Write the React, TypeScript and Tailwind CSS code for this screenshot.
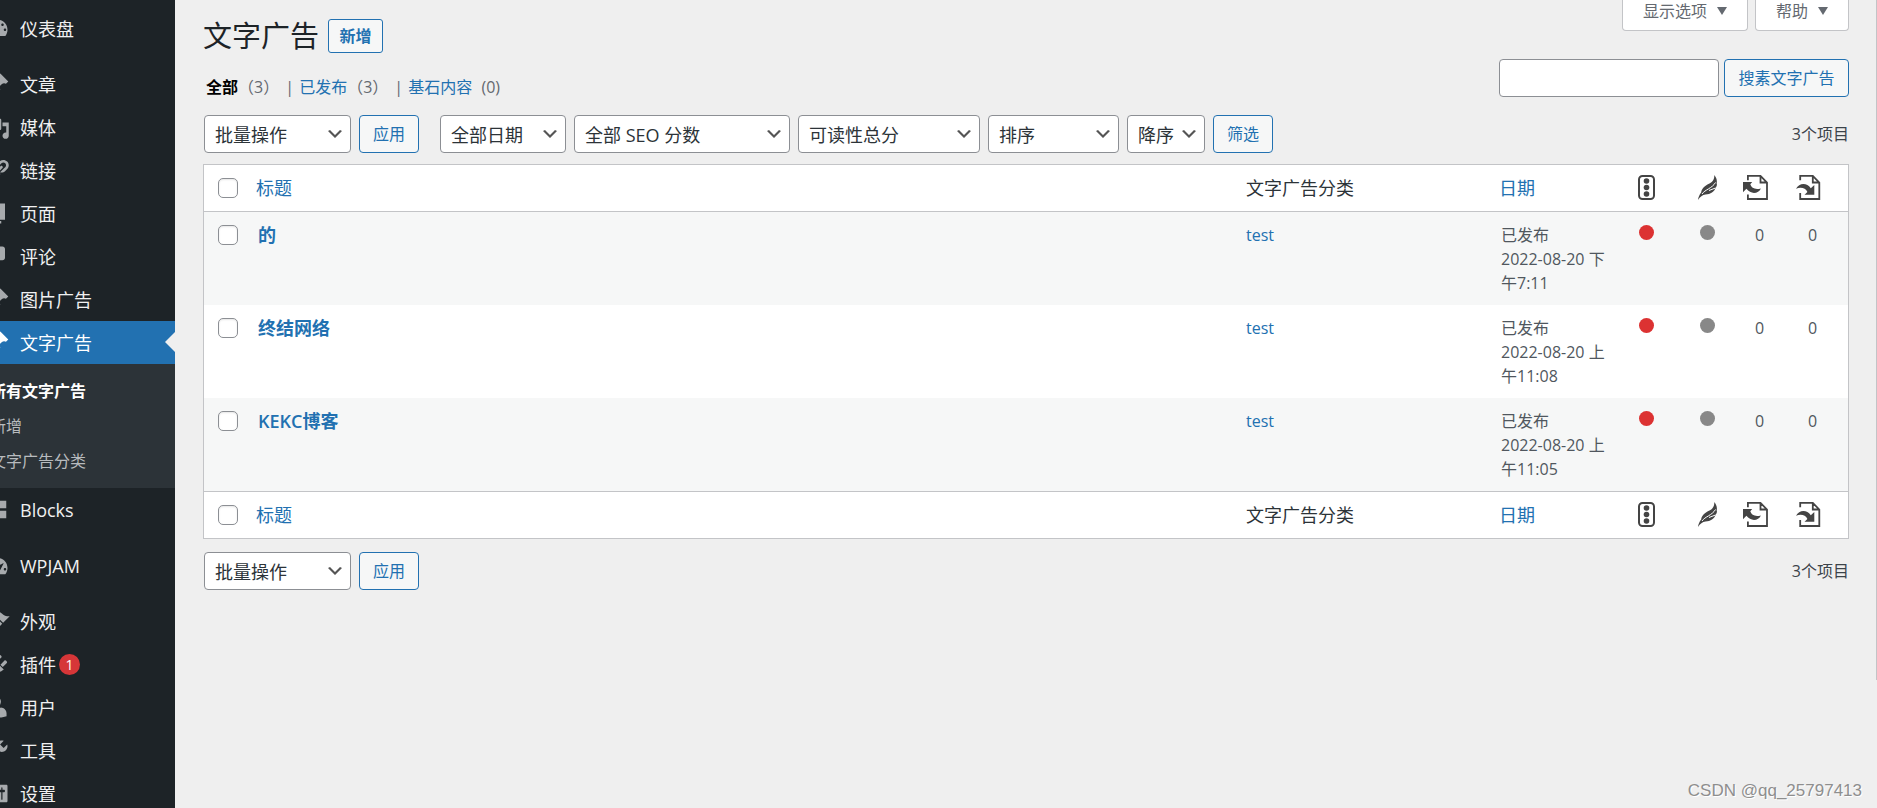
import * as React from "react"
import { clsx } from "clsx"

const icons = {
  dashboard:
    "M3.76 16h12.48c1.1-1.37 1.76-3.11 1.76-5 0-4.42-3.58-8-8-8s-8 3.58-8 8c0 1.89.66 3.63 1.76 5zM10 4c.55 0 1 .45 1 1s-.45 1-1 1-1-.45-1-1 .45-1 1-1zM6 6c.55 0 1 .45 1 1s-.45 1-1 1-1-.45-1-1 .45-1 1-1zm8 0c.55 0 1 .45 1 1s-.45 1-1 1-1-.45-1-1 .45-1 1-1zm-5.37 5.55L12 7v6c0 1.1-.9 2-2 2s-2-.9-2-2c0-.57.24-1.08.63-1.45zM4 10c.55 0 1 .45 1 1s-.45 1-1 1-1-.45-1-1 .45-1 1-1zm12 0c.55 0 1 .45 1 1s-.45 1-1 1-1-.45-1-1 .45-1 1-1zm-5 3c0-.55-.45-1-1-1s-1 .45-1 1 .45 1 1 1 1-.45 1-1z",
  post: "M10.44 3.02l1.82-1.82 6.36 6.35-1.83 1.82c-1.05-.68-2.48-.57-3.41.36l-.75.75c-.92.93-1.04 2.35-.35 3.41l-1.83 1.82-2.41-2.41-2.8 2.79c-.42.42-3.38 2.71-3.8 2.29s1.86-3.39 2.28-3.81l2.79-2.79L4.1 9.36l1.83-1.82c1.05.69 2.48.57 3.4-.36l.75-.75c.93-.92 1.05-2.35.36-3.41z",
  media:
    "M13 11V4c0-.55-.45-1-1-1h-1.67L9 1H5L3.67 3H2c-.55 0-1 .45-1 1v7c0 .55.45 1 1 1h10c.55 0 1-.45 1-1zM7 4.5c1.38 0 2.5 1.12 2.5 2.5S8.38 9.5 7 9.5 4.5 8.38 4.5 7 5.62 4.5 7 4.5zM14 6h5v10.5c0 1.38-1.12 2.5-2.5 2.5S14 17.88 14 16.5s1.12-2.5 2.5-2.5c.17 0 .34.02.5.05V9h-3V6zm-4 8.05V13h2v3.5c0 1.38-1.12 2.5-2.5 2.5S7 17.88 7 16.5 8.12 14 9.5 14c.17 0 .34.02.5.05z",
  links:
    "M17.74 2.76c1.68 1.69 1.68 4.41 0 6.1l-1.53 1.52c-1.12 1.12-2.7 1.47-4.14 1.09l2.62-2.61.76-.77.76-.76c.84-.84.84-2.2 0-3.04-.84-.85-2.2-.85-3.04 0l-.77.76-3.38 3.38c-.37-1.44-.02-3.02 1.1-4.14l1.52-1.53c1.69-1.68 4.42-1.68 6.1 0zM8.59 13.43l5.34-5.34c.42-.42.42-1.1 0-1.52-.44-.43-1.13-.39-1.53 0l-5.33 5.34c-.42.42-.42 1.1 0 1.52.44.43 1.13.39 1.52 0zm-.76 2.29l4.14-4.15c.38 1.44.03 3.02-1.09 4.14l-1.52 1.53c-1.69 1.68-4.41 1.68-6.1 0-1.68-1.68-1.68-4.42 0-6.1l1.53-1.52c1.12-1.12 2.7-1.47 4.14-1.1l-4.14 4.15c-.85.84-.85 2.2 0 3.05.84.84 2.2.84 3.04 0z",
  page: "M6 15V2h10v13H6zm-1 1h8v2H3V5h2v11z",
  comments: "M5 2h9c1.1 0 2 .9 2 2v7c0 1.1-.9 2-2 2h-2l-5 5v-5H5c-1.1 0-2-.9-2-2V4c0-1.1.9-2 2-2z",
  blocks: "M9 9V3H3v6h6zm8 0V3h-6v6h6zm-8 8v-6H3v6h6zm8 0v-6h-6v6h6z",
  performance:
    "M3.76 17.01h12.48C17.34 15.63 18 13.9 18 12c0-4.41-3.58-8-8-8s-8 3.59-8 8c0 1.9.66 3.63 1.76 5.01zM9 6c0-.55.45-1 1-1s1 .45 1 1c0 .56-.45 1-1 1s-1-.44-1-1zM4 8c0-.55.45-1 1-1s1 .45 1 1c0 .56-.45 1-1 1s-1-.44-1-1zm4.52 3.4c.84-.83 6.51-3.5 6.51-3.5s-2.66 5.68-3.49 6.51c-.84.84-2.18.84-3.02 0-.83-.83-.83-2.18 0-3.01zM3 13c0-.55.45-1 1-1s1 .45 1 1c0 .56-.45 1-1 1s-1-.44-1-1zm6 0c0 .56.45 1 1 1s1-.44 1-1c0-.55-.45-1-1-1s-1 .45-1 1zm6 0c0-.55.45-1 1-1s1 .45 1 1c0 .56-.45 1-1 1s-1-.44-1-1z",
  appearance:
    "M14.48 11.06L7.41 3.99l1.5-1.5c.5-.56 2.3-.47 3.51.32 1.21.8 1.43 1.28 2.91 2.1 1.18.64 2.45 1.26 4.45.85zm-.71.71L6.7 4.7 4.93 6.47c-.39.39-.39 1.02 0 1.41l1.06 1.06c.39.39.39 1.03 0 1.42-.6.6-1.43 1.11-2.21 1.69-.35.26-.7.53-1.01.84C1.43 14.23.4 16.08 1.4 17.07c.99 1 2.84-.03 4.18-1.36.31-.31.58-.66.85-1.02.57-.78 1.08-1.61 1.69-2.21.39-.39 1.02-.39 1.41 0l1.06 1.06c.39.39 1.02.39 1.41 0z",
  plugins:
    "M13.11 4.36L9.87 7.6 8 5.73l3.24-3.24c.35-.34 1.05-.2 1.56.32.52.51.66 1.21.31 1.55zm-8 1.77l.91-1.12 9.01 9.01-1.19.84c-.71.71-2.63 1.16-3.82 1.16H6.14L4.9 17.26c-.59.59-1.54.59-2.12 0-.59-.58-.59-1.53 0-2.12l1.24-1.24v-3.88c0-1.13.4-3.19 1.09-3.89zm7.26 3.97l3.24-3.24c.34-.35 1.04-.21 1.55.31.52.51.66 1.21.31 1.55l-3.24 3.25z",
  users:
    "M10 9.25c-2.27 0-2.73-3.44-2.73-3.44C7 4.02 7.82 2 9.97 2c2.16 0 2.98 2.02 2.71 3.81 0 0-.41 3.44-2.68 3.44zm0 2.57L12.72 10c2.39 0 4.52 2.33 4.52 4.53v2.49s-3.65 1.13-7.24 1.13c-3.65 0-7.24-1.13-7.24-1.13v-2.49c0-2.25 1.94-4.48 4.47-4.48z",
  tools:
    "M16.68 9.77c-1.34 1.34-3.3 1.67-4.95.99l-5.41 6.52c-.99.99-2.59.99-3.58 0s-.99-2.59 0-3.57l6.52-5.42c-.68-1.65-.35-3.61.99-4.95 1.28-1.28 3.12-1.62 4.72-1.06l-2.89 2.89 2.82 2.82 2.86-2.87c.53 1.58.18 3.39-1.08 4.65zM3.81 16.21c.4.39 1.04.39 1.43 0 .4-.4.4-1.04 0-1.43-.39-.4-1.03-.4-1.43 0-.39.39-.39 1.03 0 1.43z",
  settings:
    "M18 16V4c0-.55-.45-1-1-1H3c-.55 0-1 .45-1 1v12c0 .55.45 1 1 1h14c.55 0 1-.45 1-1zM8 11h1c.55 0 1 .45 1 1s-.45 1-1 1H8v1.5c0 .28-.22.5-.5.5s-.5-.22-.5-.5V13H6c-.55 0-1-.45-1-1s.45-1 1-1h1V5.5c0-.28.22-.5.5-.5s.5.22.5.5V11zm5-2h-1c-.55 0-1-.45-1-1s.45-1 1-1h1V5.5c0-.28.22-.5.5-.5s.5.22.5.5V7h1c.55 0 1 .45 1 1s-.45 1-1 1h-1v5.500c0 .28-.22.5-.5.5s-.5-.22-.5-.5V9z",
}

interface MenuItem {
  label: string
  icon: keyof typeof icons
  badge?: number
  children?: string[]
}

const menuGroups: MenuItem[][] = [
  [{ label: "仪表盘", icon: "dashboard" }],
  [
    { label: "文章", icon: "post" },
    { label: "媒体", icon: "media" },
    { label: "链接", icon: "links" },
    { label: "页面", icon: "page" },
    { label: "评论", icon: "comments" },
    { label: "图片广告", icon: "post" },
    { label: "文字广告", icon: "post", children: ["所有文字广告", "新增", "文字广告分类"] },
    { label: "Blocks", icon: "blocks" },
  ],
  [{ label: "WPJAM", icon: "performance" }],
  [
    { label: "外观", icon: "appearance" },
    { label: "插件", icon: "plugins", badge: 1 },
    { label: "用户", icon: "users" },
    { label: "工具", icon: "tools" },
    { label: "设置", icon: "settings" },
  ],
]

const posts = [
  { title: "的", category: "test", date: "2022-08-20 下午7:11" },
  { title: "终结网络", category: "test", date: "2022-08-20 上午11:08" },
  { title: "KEKC博客", category: "test", date: "2022-08-20 上午11:05" },
]

function SidebarItem({ item }: { item: MenuItem }) {
  const active = Boolean(item.children)
  return (
    <li>
      <a
        href="#"
        className={clsx(
          "relative flex h-[43px] items-center text-lg",
          active ? "bg-[#2271b1] text-white" : "text-[#f0f0f1]"
        )}
      >
        <span className="flex w-[45px] shrink-0 justify-center">
          <svg
            viewBox="0 0 20 20"
            className={clsx("size-[25px] fill-current", active ? "text-white" : "text-[#a7aaad]")}
            aria-hidden="true"
          >
            <path d={icons[item.icon]} />
          </svg>
        </span>
        {item.label}
        {item.badge && (
          <span className="ml-[3px] flex size-[21px] items-center justify-center rounded-full bg-[#d63638] text-sm text-white">
            {item.badge}
          </span>
        )}
        {active && (
          <span className="absolute top-[11px] right-0 border-y-[10px] border-r-[10px] border-y-transparent border-r-[#efefef]" />
        )}
      </a>
      {item.children && (
        <ul className="bg-[#2c3338] pt-[9px] pb-[10px]">
          {item.children.map((child, index) => (
            <li key={child}>
              <a
                href="#"
                className={clsx(
                  "flex h-[35px] items-center pl-[15px] text-base",
                  index === 0 ? "font-semibold text-white" : "text-[#b8bbbe]"
                )}
              >
                {child}
              </a>
            </li>
          ))}
        </ul>
      )}
    </li>
  )
}

function Sidebar() {
  return (
    <nav className="w-[175px] shrink-0 overflow-x-hidden overflow-y-auto bg-[#1d2327] [scrollbar-width:none]">
      {/* the menu is scrolled sideways, its left edge is out of view */}
      <div className="-ml-[25px] flex flex-col gap-[13px] pt-[7px]">
        {menuGroups.map((group, index) => (
          <ul key={index}>
            {group.map((item) => (
              <SidebarItem key={item.label} item={item} />
            ))}
          </ul>
        ))}
      </div>
    </nav>
  )
}

function Select({ label, className }: { label: string; className: string }) {
  return (
    <div className={clsx("relative", className)}>
      <select
        aria-label={label}
        className="h-[38px] w-full appearance-none rounded border border-[#8c8f94] bg-white pt-[2px] pr-[26px] pl-[10px] text-lg leading-8 text-[#2c3338]"
      >
        <option>{label}</option>
      </select>
      <svg
        viewBox="0 0 20 20"
        className="pointer-events-none absolute top-[9px] right-[6px] size-5 fill-[#555]"
        aria-hidden="true"
      >
        <path d="M5 6l5 5 5-5 2 1-7 7-7-7 2-1z" />
      </svg>
    </div>
  )
}

function Button({ children, className }: { children: React.ReactNode; className?: string }) {
  return (
    <button
      type="button"
      className={clsx(
        "h-[38px] rounded border border-[#2271b1] bg-[#f6f7f7] text-base text-[#2271b1]",
        className
      )}
    >
      {children}
    </button>
  )
}

function ScreenTab({ children, className }: { children: React.ReactNode; className: string }) {
  return (
    <button
      type="button"
      className={clsx(
        "flex h-[31px] items-center justify-center gap-[10px] rounded-b border border-t-0 border-[#c3c4c7] bg-white pb-[9px] text-base leading-5 text-[#646970]",
        className
      )}
    >
      {children}
      <svg viewBox="0 0 10 8" className="h-2 w-[10px] fill-current" aria-hidden="true">
        <path d="M0 0h10L5 8z" />
      </svg>
    </button>
  )
}

function Checkbox({ label }: { label: string }) {
  return (
    <input
      type="checkbox"
      aria-label={label}
      className="block size-5 appearance-none rounded-[5px] border border-[#8c8f94] bg-white shadow-[inset_0_1px_2px_rgba(0,0,0,0.1)]"
    />
  )
}

function ScoreIcon() {
  return (
    <svg viewBox="0 0 17 25" className="h-[25px] w-[17px]" role="img" aria-label="SEO 分数">
      <rect x="1" y="1" width="15" height="23" rx="3.5" fill="none" stroke="#444" strokeWidth="2" />
      <g fill="#444">
        <circle cx="8.5" cy="6" r="2.8" />
        <circle cx="8.5" cy="12.5" r="2.8" />
        <circle cx="8.5" cy="19" r="2.8" />
      </g>
    </svg>
  )
}

function FeatherIcon() {
  return (
    <svg viewBox="0 0 20 25" className="h-[25px] w-5" role="img" aria-label="可读性分数">
      <path
        fill="#444"
        d="M0 25C.4 22 1.500 19.500 3.200 17.500 3.500 13.500 7 10.500 11.500 8.500 15 6.800 16.700 3.500 16.200 0 18.500 2.500 19.300 5.500 18.700 8.500 19.300 9.500 18.800 11.500 17.500 13 16.500 16.500 12.500 19.500 7.500 19.500 4.500 19.800 2 21.800 0 25z"
      />
      <path
        fill="none"
        stroke="#fff"
        strokeWidth="1"
        d="M4 19C7 14.500 14 13.500 17.500 7.500M11 15.500L17.500 13"
      />
    </svg>
  )
}

function LinksOutIcon() {
  return (
    <svg viewBox="0 0 25 25" className="size-[25px]" role="img" aria-label="出站链接">
      <path
        fill="none"
        stroke="#444"
        strokeWidth="1.8"
        d="M4.900 5.200V.9h12.600l6.500 6.600v16.500H4.900v-4.500M17.500 1v6.500h6.500"
      />
      <path
        fill="#444"
        d="M0 7h9.200L7.300 9.300C8.500 13 12 15 17.900 13.400 15.500 18.800 8 19.800 3.400 13.800L0 17.200z"
      />
    </svg>
  )
}

function LinksInIcon() {
  return (
    <svg viewBox="0 0 25 25" className="size-[25px]" role="img" aria-label="入站链接">
      <path
        fill="none"
        stroke="#444"
        strokeWidth="1.8"
        d="M4.200 5.200V.9h12.600l6.500 6.600v16.500H4.200v-6M16.800 1v6.500h6.500"
      />
      <path
        fill="#444"
        d="M0 13.800C3 8 10.500 7 14.800 13.200L18.300 10v9.800H8.500l2.900-2.900C9.500 13 5 11.800 0 13.800z"
      />
    </svg>
  )
}

function HeadingRow({ edge }: { edge: "top" | "bottom" }) {
  const cell = clsx(
    "h-[47px] border-[#c3c4c7] p-0 text-left align-middle text-lg font-normal text-[#2c3338]",
    edge === "top" ? "border-b" : "border-t"
  )
  return (
    <tr className="bg-white">
      <td className={clsx(cell, "pl-[14px]")}>
        <Checkbox label="全选" />
      </td>
      <th className={clsx(cell, "pl-[10px]")}>
        <a href="#" className="text-[#2271b1]">标题</a>
      </th>
      <th className={clsx(cell, "pl-[10px]")}>文字广告分类</th>
      <th className={clsx(cell, "pl-[10px]")}>
        <a href="#" className="text-[#2271b1]">日期</a>
      </th>
      <th className={clsx(cell, "pb-[2px] pl-[13px]")}>
        <ScoreIcon />
      </th>
      <th className={clsx(cell, "pb-[2px] pl-[12px]")}>
        <FeatherIcon />
      </th>
      <th className={clsx(cell, "pb-[2px] pl-[12px]")}>
        <LinksOutIcon />
      </th>
      <th className={clsx(cell, "pb-[2px] pl-[12px]")}>
        <LinksInIcon />
      </th>
    </tr>
  )
}

function PostsTable() {
  return (
    <table className="w-full table-fixed border-separate border-spacing-0 border border-[#c3c4c7] bg-white text-base leading-6 text-[#50575e]">
      <colgroup>
        <col className="w-[42px]" />
        <col />
        <col className="w-[253px]" />
        <col className="w-[136px]" />
        <col className="w-[61px]" />
        <col className="w-[45px]" />
        <col className="w-[53px]" />
        <col className="w-[64px]" />
      </colgroup>
      <thead>
        <HeadingRow edge="top" />
      </thead>
      <tbody>
        {posts.map((post) => (
          <tr key={post.title} className="h-[93px] align-top odd:bg-[#f6f7f7]">
            <td className="pt-[13px] pl-[14px]">
              <Checkbox label={`选择${post.title}`} />
            </td>
            <td className="pt-[11px] pl-[12px] text-lg leading-6 font-semibold">
              <a href="#" className="text-[#2271b1]">{post.title}</a>
            </td>
            <td className="pt-[11px] pl-[10px]">
              <a href="#" className="text-[#2271b1]">{post.category}</a>
            </td>
            <td className="px-[12px] pt-[11px]">
              已发布
              <br />
              {post.date}
            </td>
            <td className="pt-[13px] pl-[14px]">
              <span className="block size-[15px] rounded-full bg-[#dc3232]" />
            </td>
            <td className="pt-[13px] pl-[14px]">
              <span className="block size-[15px] rounded-full bg-[#888]" />
            </td>
            <td className="pt-[11px] pl-[24px]">0</td>
            <td className="pt-[11px] pl-[24px]">0</td>
          </tr>
        ))}
      </tbody>
      <tfoot>
        <HeadingRow edge="bottom" />
      </tfoot>
    </table>
  )
}

function BulkActions() {
  return (
    <>
      <Select label="批量操作" className="w-[147px]" />
      <Button className="w-[60px]">应用</Button>
    </>
  )
}

export default function App() {
  return (
    <div className="flex h-screen bg-[#efefef] font-['Open_Sans','Noto_Sans_CJK_SC',sans-serif]">
      <Sidebar />
      <main className="relative min-w-0 flex-1 overflow-hidden px-7 text-base text-[#3c434a]">
        <header className="flex items-start justify-between">
          <div className="flex items-center gap-[9px] pt-[19px]">
            <h1 className="text-[29px] leading-[34px] text-[#1d2327]">文字广告</h1>
            <a
              href="#"
              className="flex h-[34px] w-[55px] items-center justify-center rounded-[3px] border border-[#2271b1] bg-[#f6f7f7] text-base font-semibold text-[#2271b1]"
            >
              新增
            </a>
          </div>
          <div className="flex gap-[7px]">
            <ScreenTab className="w-[126px]">显示选项</ScreenTab>
            <ScreenTab className="w-[94px]">帮助</ScreenTab>
          </div>
        </header>

        <div className="mt-[6px] flex items-end justify-between">
          <ul className="flex gap-[6px] pl-[3px] leading-5 text-[#646970]">
            <li>
              <a href="#" className="font-semibold text-black">全部</a>（3）
            </li>
            <li>
              | <a href="#" className="ml-px text-[#2271b1]">已发布</a>（3）
            </li>
            <li>
              | <a href="#" className="mr-[5px] ml-px text-[#2271b1]">基石内容</a> (0)
            </li>
          </ul>
          <form className="flex gap-[5px]">
            <input
              type="search"
              aria-label="搜素文字广告"
              className="h-[38px] w-[220px] rounded border border-[#8c8f94] bg-white px-[10px] text-lg"
            />
            <Button className="w-[125px]">搜素文字广告</Button>
          </form>
        </div>

        <div className="mt-[18px] mb-[11px] flex items-center gap-[8px] pl-px">
          <BulkActions />
          <div className="ml-[13px] flex gap-[8px]">
            <Select label="全部日期" className="w-[126px]" />
            <Select label="全部 SEO 分数" className="w-[216px]" />
            <Select label="可读性总分" className="w-[182px]" />
            <Select label="排序" className="w-[131px]" />
            <Select label="降序" className="w-[78px]" />
            <Button className="w-[60px]">筛选</Button>
          </div>
          <span className="ml-auto">3个项目</span>
        </div>

        <PostsTable />

        <div className="mt-[13px] flex items-center gap-[8px] pl-px">
          <BulkActions />
          <span className="ml-auto">3个项目</span>
        </div>

        <span className="absolute top-0 right-0 h-[680px] w-px bg-[#c3c4c7]" />
        <span className="absolute right-[15px] bottom-[7px] font-['Liberation_Sans',sans-serif] text-[17px] leading-5 text-[#8e8e8e] [text-shadow:1px_1px_0_#fff]">
          CSDN @qq_25797413
        </span>
      </main>
    </div>
  )
}
